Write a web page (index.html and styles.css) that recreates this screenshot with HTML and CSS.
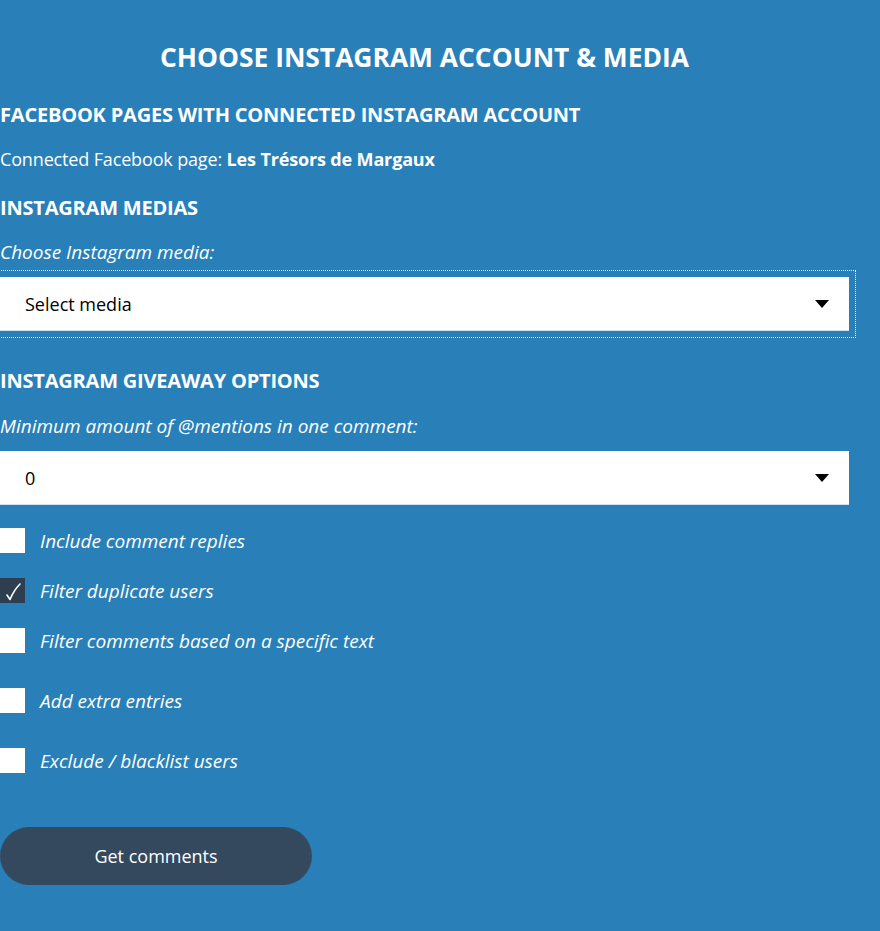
FILE: index.html
```html
<!DOCTYPE html>
<html lang="en">
<head>
  <meta charset="UTF-8" />
  <meta name="viewport" content="width=device-width, initial-scale=1" />
  <title>Instagram Giveaway</title>
  <link rel="stylesheet" href="styles.css">
</head>
<body>
  <div class="giveaway-container">
    <h1>Choose Instagram account &amp; media</h1>

    <h3>Facebook pages with connected Instagram account</h3>
    <p class="page-info">Connected Facebook page: <strong>Les Trésors de Margaux</strong></p>

    <h3>Instagram medias</h3>
    <label class="field-label" for="media">Choose Instagram media:</label>
    <div class="select-wrap focused">
      <select id="media">
        <option>Select media</option>
      </select>
    </div>

    <h3 class="options-title">Instagram giveaway options</h3>
    <label class="field-label mentions-label" for="mentions">Minimum amount of @mentions in one comment:</label>
    <div class="select-wrap">
      <select id="mentions">
        <option>0</option>
        <option>1</option>
        <option>2</option>
        <option>3</option>
      </select>
    </div>

    <div class="options">
      <label class="check"><span class="box"></span>Include comment replies</label>
      <label class="check">
        <span class="box checked">
          <svg width="25" height="25" viewBox="0 0 25 25"><path d="M7 17 L10 21.5 Q14 12 20 6" fill="none" stroke="#fff" stroke-width="1.6" stroke-linecap="round" stroke-linejoin="round"/></svg>
        </span>Filter duplicate users
      </label>
      <label class="check"><span class="box"></span>Filter comments based on a specific text</label>
      <label class="check spaced"><span class="box"></span>Add extra entries</label>
      <label class="check spaced"><span class="box"></span>Exclude / blacklist users</label>
    </div>

    <button type="button">Get comments</button>
  </div>
</body>
</html>
```

FILE: styles.css
```css
body {
  font-family: "Open Sans", "Noto Sans", sans-serif;
  background-color: #2980b9;
  color: #fff;
  margin: 0;
}
.giveaway-container {
  width: 849px;
  padding-top: 40px;
}
h1 {
  margin: 0 0 28px;
  font-size: 26.4px;
  font-weight: bold;
  text-transform: uppercase;
  text-align: center;
  line-height: 34px;
}
h3 {
  margin: 23px 0 0;
  font-size: 20px;
  font-weight: bold;
  text-transform: uppercase;
  letter-spacing: -0.2px;
  line-height: 26px;
}
.page-info {
  margin: 18px 0 0;
  font-size: 18px;
  letter-spacing: -0.15px;
  line-height: 26px;
}
.page-info strong {
  font-weight: bold;
}
.field-label {
  display: block;
  margin-top: 18px;
  font-size: 19px;
  font-style: italic;
  line-height: 26px;
}
.mentions-label {
  margin-top: 19px;
}
.select-wrap {
  position: relative;
  margin-top: 12px;
}
.select-wrap::after {
  content: "";
  position: absolute;
  right: 20px;
  top: 23px;
  border-left: 7px solid transparent;
  border-right: 7px solid transparent;
  border-top: 8px solid #000;
  pointer-events: none;
}
.select-wrap.focused {
  outline: 1px dotted #fff;
  outline-offset: 6px;
}
select {
  display: block;
  width: 100%;
  height: 54px;
  padding: 0 25px;
  border: none;
  border-bottom: 1px solid #cfe0ee;
  border-radius: 0;
  background: #fff;
  color: #000;
  font-family: "Open Sans", "Noto Sans", sans-serif;
  font-size: 18px;
  -webkit-appearance: none;
  appearance: none;
}
.options-title {
  margin-top: 37px;
}
.options {
  margin-top: 23px;
}
.check {
  display: flex;
  align-items: center;
  gap: 15px;
  height: 25px;
  margin-bottom: 25px;
  font-size: 19px;
  font-style: italic;
}
.check.spaced {
  margin-top: 35px;
}
.box {
  display: block;
  width: 25px;
  height: 25px;
  flex-shrink: 0;
  background: #fff;
}
.box svg {
  display: block;
}
.box.checked {
  background: #2c3e50;
}
button {
  display: block;
  margin-top: 54px;
  width: 312px;
  height: 58px;
  border: none;
  border-radius: 29px;
  background-color: #34495e;
  color: #fff;
  font-family: "Open Sans", "Noto Sans", sans-serif;
  font-size: 18px;
  cursor: pointer;
}
```
